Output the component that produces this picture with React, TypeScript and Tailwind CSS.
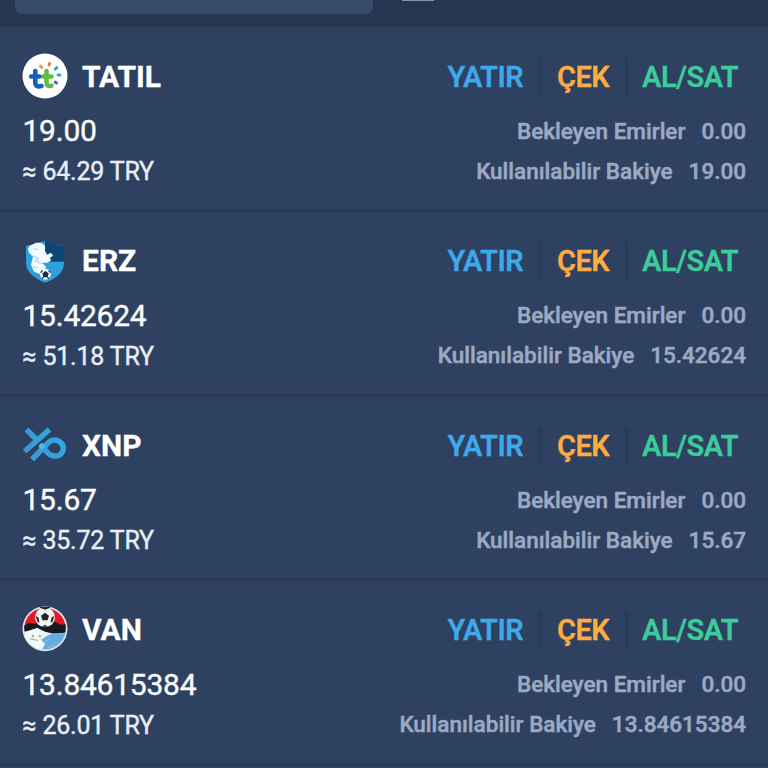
import type { ReactNode } from "react";

function TatilLogo() {
  return (
    <svg viewBox="0 0 60 60" className="h-[60px] w-[60px]">
      <circle cx="30" cy="30" r="22.5" fill="#fff" />
      <g fill="none" strokeLinecap="round" strokeLinejoin="round" strokeWidth="4.600">
        <path d="M31.500 25v11.500q0 4.500 5 3.200M28 30.500h8.500" stroke="#5fbd46" />
        <path d="M20.300 25v11.500q0 5 6.200 3.500M16.200 30.500h8" stroke="#1560bd" />
      </g>
      <g fill="none" strokeLinecap="round" strokeWidth="3">
        <path d="M25.500 20l1.300 1.600" stroke="#ed9b56" />
        <path d="M34.500 17.500l-.3 1.500" stroke="#e28143" />
        <path d="M41.800 21.700l-1.600 1.400" stroke="#2dab9b" />
        <path d="M45 29h-2" stroke="#35a8c7" />
        <path d="M41.500 37l-1.200-.8" stroke="#4862b4" />
      </g>
    </svg>
  );
}

function ErzLogo() {
  return (
    <svg viewBox="0 -0.7 60 60" className="h-[60px] w-[60px]">
      <path d="M11 15q10-1 19-5 9 4 19 5v17q0 13-19 20Q11 44 11 32z" fill="#2da1dc" />
      <path d="M30 10q9 4 19 5v16H30z" fill="#0c4777" />
      <path d="M13 18l2-3 6-3 5 0 4 3 0 5 2 4 4-2 2 3-3 2 1 3-4 2-5 0 4 4-1 4-4-1 1 5-8-3-3-7 2-8-4-4z" fill="#f4fbff" />
      <path d="M18 25l6 3-4 2 7 3M18 36l5 1M18 18l5 1" fill="none" stroke="#a8cde7" strokeWidth="1" />
      <circle cx="30.500" cy="43.500" r="5.500" fill="#eef5f8" />
      <path d="M30.500 41l2.500 2-1 3h-3l-1-3zM25.500 42l2-2M35.500 42l-2-2M27 48l2-2M34 48l-2-2" fill="#172e45" stroke="#172e45" strokeWidth="1.200" />
    </svg>
  );
}

function XnpLogo() {
  return (
    <svg viewBox="0 0 60 60" className="h-[60px] w-[60px]">
      <defs>
        <linearGradient id="xnp-ribbon" x1="10" y1="43" x2="50" y2="18" gradientUnits="userSpaceOnUse">
          <stop stopColor="#4192cf" />
          <stop offset="1" stopColor="#27aee5" />
        </linearGradient>
      </defs>
      <g fill="none" stroke="url(#xnp-ribbon)" strokeWidth="5.500">
        <path d="M9.500 36.500L34.500 14.500" />
        <path d="M11.500 14.500L22 25" />
        <path d="M17 44.500L33.500 27.500q4.500-4 10-1.500 6 3.500 4.500 9.500-2 6-8 5.500-4 0-7-3l-7-7.500" strokeLinejoin="round" />
      </g>
      <path d="M25 29.500l3.500 3.500" stroke="#49c4e5" strokeWidth="5" />
    </svg>
  );
}

function VanLogo() {
  return (
    <svg viewBox="0 -0.7 60 60" className="h-[60px] w-[60px]">
      <defs>
        <clipPath id="van-disc">
          <circle cx="30" cy="29" r="20.800" />
        </clipPath>
      </defs>
      <circle cx="30" cy="29" r="22.500" fill="#dce7ee" />
      <g clipPath="url(#van-disc)">
        <path d="M5 5h50v50H5z" fill="#e9f5fb" />
        <path d="M5 5h50v23H5z" fill="#e61924" />
        <path d="M6 28l8-5 6 1 5-2h15l6 3 7-1v9l-14 1-9-2-8-4-8 4H7z" fill="#171b20" />
        <path d="M32 36q7-4 13-2l7-2v13L37 53l-10-3 3-6-4-4z" fill="#64afe0" />
        <path d="M10 32l10-3 9 5-5 5 5 5-8 5-11-8z" fill="#f2fafc" />
        <path d="M17 36l2 1M24 36l2 1" stroke="#b5a74c" strokeWidth="2" />
        <path d="M15 39l8 2M30 42l5-3M33 48l8-2" stroke="#a0b8c4" strokeWidth="1.200" />
      </g>
      <circle cx="30" cy="17.500" r="10" fill="#f1f2f2" />
      <path d="M30 13l4 3-1.500 4.500h-5L26 16zM25 8l5 2 5-2v-1H25zM20.500 16l3 2 1 5-2-1zM39.500 16l-3 2-1 5 2-1zM27 27l3-2 3 2z" fill="#22262b" />
    </svg>
  );
}

type Asset = { code: string; amount: string; value: string; logo: ReactNode };

const assets: Asset[] = [
  { code: "TATIL", amount: "19.00", value: "64.29", logo: <TatilLogo /> },
  { code: "ERZ", amount: "15.42624", value: "51.18", logo: <ErzLogo /> },
  { code: "XNP", amount: "15.67", value: "35.72", logo: <XnpLogo /> },
  { code: "VAN", amount: "13.84615384", value: "26.01", logo: <VanLogo /> },
];

function AssetRow({ code, amount, value, logo }: Asset) {
  return (
    <section className="h-[184.4px] shrink-0 border-b-[3px] border-[#293a56] pt-[18px] pr-[22px] pl-[15px]">
      <div className="flex h-[60px] items-center justify-between">
        <div className="flex items-center">
          {logo}
          <h2 className="ml-[7px] pt-[2px] text-[30px] leading-[40px] font-bold text-white [-webkit-text-stroke:0.3px_#ffffff]">{code}</h2>
        </div>
        <div className="flex items-center pt-[2px] pr-[8px] text-[29px] leading-[38px] font-semibold tracking-[-0.55px]">
          <button className="text-[#3da9ea] [-webkit-text-stroke:0.3px_#3da9ea]">YATIR</button>
          <span className="mr-[15px] ml-[16px] h-[38px] w-[3px] bg-[#2a3b57]" />
          <button className="text-[#fcac43] [-webkit-text-stroke:0.3px_#fcac43]">ÇEK</button>
          <span className="mr-[14px] ml-[16px] h-[38px] w-[3px] bg-[#2a3b57]" />
          <button className="text-[#3ccb9b] [-webkit-text-stroke:0.3px_#3ccb9b]">AL/SAT</button>
        </div>
      </div>
      <div className="flex justify-between pt-[5px] pl-[7.500px]">
        <div className="pt-[0.4px]">
          <p className="text-[30px] leading-[40px] tracking-[-0.25px] text-[#f8fafc] [-webkit-text-stroke:0.4px_#f8fafc]">{amount}</p>
          <p className="pt-px text-[25px] leading-[40px] tracking-[-0.2px] text-[#e8edf8] [-webkit-text-stroke:0.4px_#e8edf8]">≈ {value} TRY</p>
        </div>
        <div className="text-[22.500px] leading-[40px] font-medium text-[#9ba9c4] [-webkit-text-stroke:0.5px_#9ba9c4]">
          <p className="flex justify-end gap-[16px]"><span>Bekleyen Emirler</span><span>0.00</span></p>
          <p className="flex justify-end gap-[16px]"><span>Kullanılabilir Bakiye</span><span>{amount}</span></p>
        </div>
      </div>
    </section>
  );
}

export default function App() {
  return (
    <main className="flex h-screen flex-col overflow-hidden bg-[#2f4160] font-[Roboto,sans-serif]">
      <header className="flex h-[27px] shrink-0 items-start bg-[#263550] pl-[15px]">
        <div className="h-[14px] w-[358px] rounded-b-[7px] bg-[#364a6b]" />
        <div className="ml-[29px] h-px w-[32px] bg-[#8292ad]" />
      </header>
      <div className="flex flex-col pt-px">
        {assets.map((asset) => <AssetRow key={asset.code} {...asset} />)}
      </div>
    </main>
  );
}
